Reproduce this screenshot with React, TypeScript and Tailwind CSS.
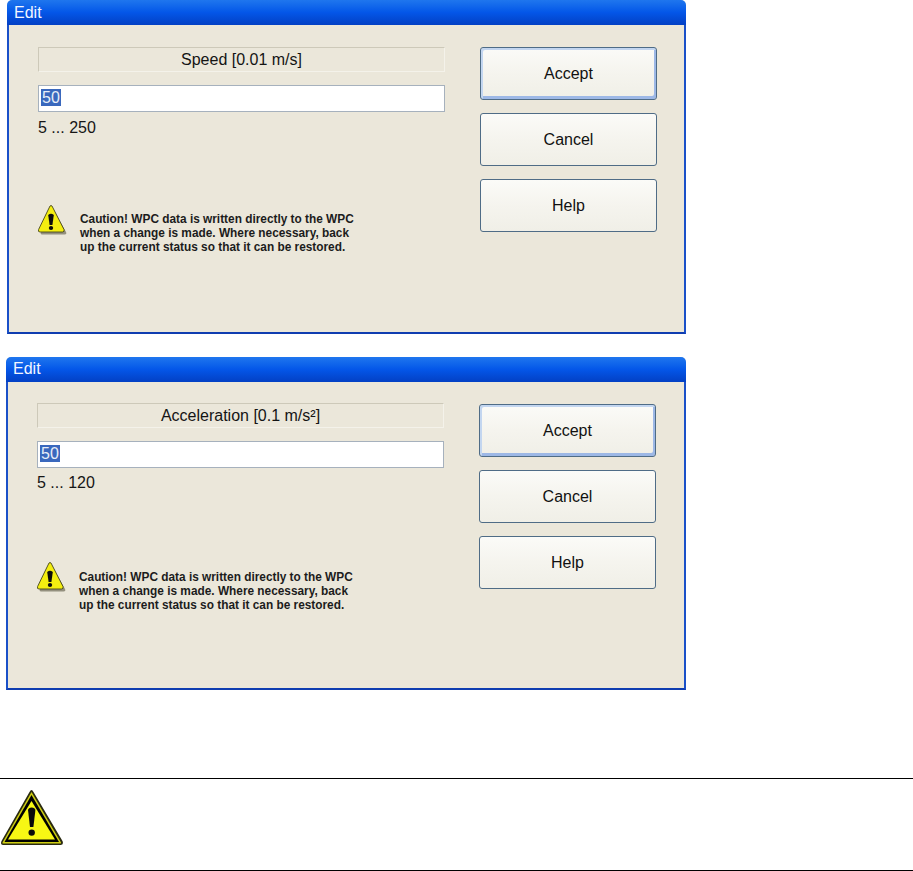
const FONT = "font-['Liberation_Sans',Arial,sans-serif]";

function SmallWarn() {
  return (
    <svg width="30" height="30" viewBox="0 0 30 30" className="block">
      <path d="M14.5 3 L28 27 Q29 29.5 26.5 29.5 L4 29.5 Q2 29.5 3 27 Z" fill="#77735f" opacity="0.75" />
      <path d="M12 1 Q13 0 14 1 L26 24.5 Q26.8 27 24.5 27 L2 27 Q-0.3 27 0.6 24.5 Z" fill="#f4ee10" stroke="#45451c" strokeWidth="0.9" strokeLinejoin="round" />
      <path d="M10.2 10 Q13 7.6 15.8 10 L14.4 20 L11.6 20 Z" fill="#0c0c0c" />
      <ellipse cx="13" cy="23" rx="2.2" ry="2" fill="#0c0c0c" />
    </svg>
  );
}

function BigWarn() {
  return (
    <svg width="63" height="56" viewBox="0 0 63 56" className="block">
      <path d="M30.5 0 Q31.5 0 32.5 2 L61.5 51 Q63 55 59.5 55 L2 55 Q-1 55 0.5 51 L28.5 2 Q29.5 0 30.5 0 Z" fill="#2a2a10" />
      <path d="M30.5 2 L60 52.6 Q60.5 53.6 59.5 53.6 L2 53.6 Q1 53.6 1.5 52.6 Z" fill="#cfcf12" />
      <path d="M30.5 5 L58 52 L3.5 52 Z" fill="#000" />
      <path d="M30.5 11 L54 49.6 L7 49.6 Z" fill="#f7f714" />
      <path d="M27 20 Q27.5 17.5 30.7 17.5 Q34 17.5 34.4 20 L32.4 37 L29 37 Z" fill="#0a0a0a" />
      <circle cx="30.7" cy="42.6" r="3.2" fill="#0a0a0a" />
    </svg>
  );
}

function XpButton({ label, focused, className }: { label: string; focused?: boolean; className: string }) {
  return (
    <div
      className={`flex items-center justify-center rounded-[3px] border border-[#4f6c86] bg-gradient-to-b from-[#fbfbf8] via-[#f5f4ee] to-[#f0efe7] pt-px text-[16px] text-[#111] ${
        focused ? "shadow-[inset_2px_2px_0_0_#c3d6f0,inset_-2px_-3px_0_0_#9db8e6]" : ""
      } ${className}`}
    >
      {label}
    </div>
  );
}

function EditWindow({
  title,
  range,
  className,
  topGap,
  rangeGap,
  warnGap,
  textGap,
  inputPad,
}: {
  title: string;
  range: string;
  className: string;
  topGap: string;
  rangeGap: string;
  warnGap: string;
  textGap: string;
  inputPad: string;
}) {
  return (
    <section className={`flex h-[334px] flex-col overflow-hidden rounded-t-[5px] bg-[#ebe7da] ${FONT} ${className}`}>
      <header className="flex h-[25px] shrink-0 items-center bg-gradient-to-b from-[#1f76ee] via-[#0456e8] to-[#0340c4] pl-[7px] text-[16px] text-[#f2f6ff]">
        Edit
      </header>
      <div className="flex min-h-0 flex-1 border-x-2 border-b-2 border-x-[#1a50c8] border-b-[#0f3db0]">
        <div className={`ml-[29px] w-[407px] shrink-0 ${topGap}`}>
          <div className="flex h-[25px] items-center justify-center border border-[#cdc9b9] border-r-[#f4f2ea] border-b-[#f4f2ea] pt-px text-[16px] text-[#141414]">
            {title}
          </div>
          <div className={`mt-[13px] flex h-[27px] items-center border border-[#a6b1bd] bg-white pl-[2px] ${inputPad}`}>
            <span className="bg-[#3a68bd] px-px text-[16px] leading-[17px] text-[#e8eef8]">50</span>
          </div>
          <div className={`text-[16px] leading-[16px] text-[#161616] ${rangeGap}`}>{range}</div>
          <div className={`flex ${warnGap}`}>
            <SmallWarn />
            <p className={`ml-[12px] whitespace-nowrap text-[11.85px] font-bold leading-[14.2px] text-[#1c1c1c] ${textGap}`}>
              Caution! WPC data is written directly to the WPC
              <br />
              when a change is made. Where necessary, back
              <br />
              up the current status so that it can be restored.
            </p>
          </div>
        </div>
        <div className="ml-[35px] mt-[22px] flex w-[177px] shrink-0 flex-col">
          <XpButton label="Accept" focused className="h-[53px]" />
          <XpButton label="Cancel" className="mt-[13px] h-[53px]" />
          <XpButton label="Help" className="mt-[13px] h-[53px]" />
        </div>
      </div>
    </section>
  );
}

export default function App() {
  return (
    <div className={`flex h-[871px] w-[913px] flex-col overflow-hidden bg-white ${FONT}`}>
      <EditWindow
        title="Speed [0.01 m/s]"
        range="5 ... 250"
        className="ml-[7px] w-[679px]"
        topGap="mt-[22px]"
        rangeGap="mt-[8px]"
        warnGap="mt-[69px]"
        textGap="mt-[7px]"
        inputPad="pb-[3px]"
      />
      <EditWindow
        title="Acceleration [0.1 m/s²]"
        range="5 ... 120"
        className="ml-[6px] mt-[23px] w-[680px]"
        topGap="mt-[21px]"
        rangeGap="mt-[7px]"
        warnGap="mt-[71px]"
        textGap="mt-[8px]"
        inputPad="pb-px"
      />
      <div className="mt-[88px] h-[93px] border-y border-black pl-px pt-[11px]">
        <BigWarn />
      </div>
    </div>
  );
}
